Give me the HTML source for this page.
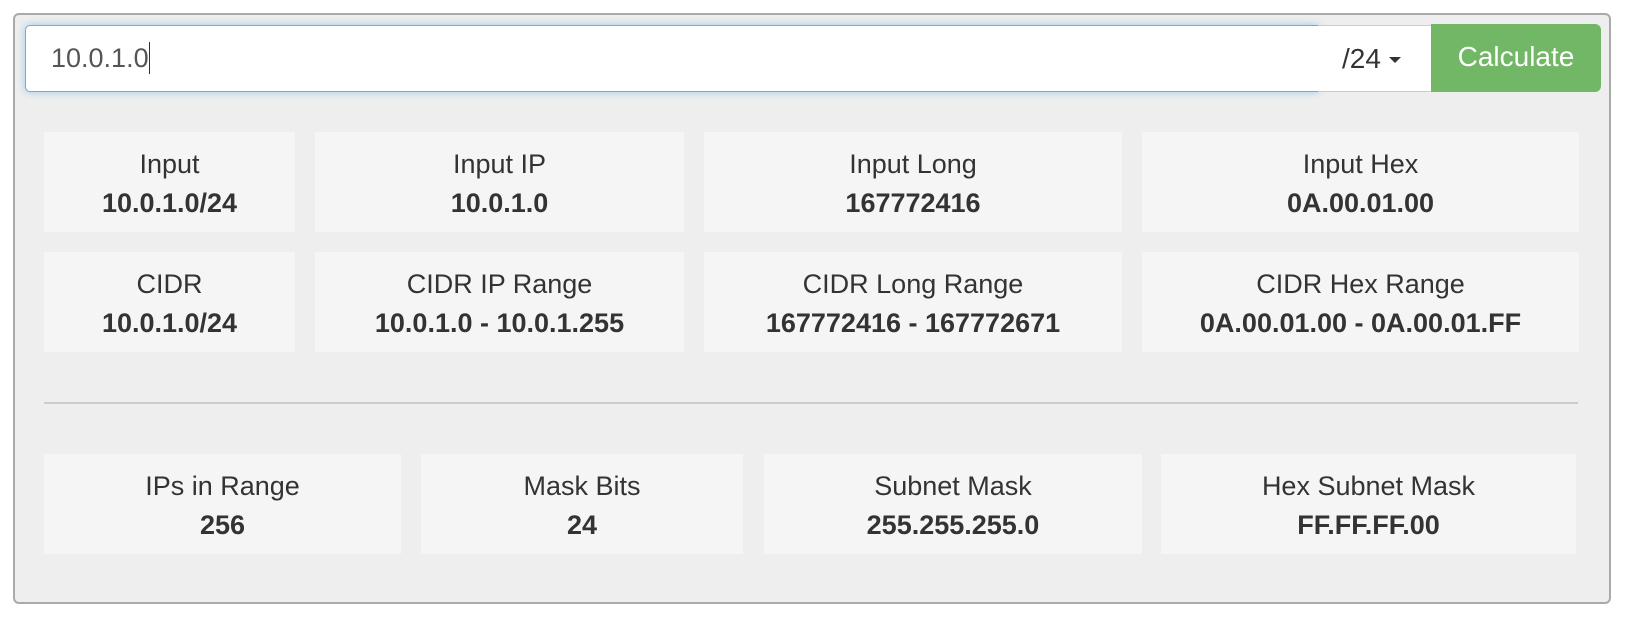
<!DOCTYPE html>
<html><head><meta charset="utf-8"><style>
*{box-sizing:border-box;margin:0;padding:0}
body{width:1628px;height:620px;background:#fff;font-family:"Liberation Sans",Arial,sans-serif;color:#333;position:relative;overflow:hidden}
.panel{position:absolute;left:13px;top:13px;width:1598px;height:591px;background:#eee;border:2px solid #aaa;border-radius:6px}
.abs{position:absolute}
.inp{left:25px;top:25px;width:1294px;height:67px;background:#fff;border:1.5px solid #66afe9;border-radius:5px 0 0 5px;box-shadow:0 0 8px rgba(102,175,233,.6);font-size:27px;line-height:64px;padding-left:25px;color:#555}
.caret{display:inline-block;width:1.5px;height:32px;background:#333;vertical-align:-7px}
.sel{left:1318px;top:25px;width:114px;height:67px;background:#fff;border:1px solid #ccc;border-left:none;font-size:28px;line-height:65px;padding-left:24px;color:#333}
.sel i{display:inline-block;width:0;height:0;border-left:6px solid transparent;border-right:6px solid transparent;border-top:6px solid #333;vertical-align:5px;margin-left:8px}
.btn{left:1431px;top:24px;width:170px;height:68px;background:#72b766;border-radius:0 6px 6px 0;color:#fff;font-size:28px;line-height:66px;text-align:center}
.c{position:absolute;background:#f5f5f5;text-align:center}
.c .l{position:absolute;left:0;right:0;top:18px;font-size:27px;line-height:28px}
.c .v{position:absolute;left:0;right:0;top:57px;font-size:27px;line-height:28px;font-weight:bold}
.hr{left:44px;top:402px;width:1534px;height:2px;background:#ccc}
</style></head><body>
<div class="panel"></div>
<div class="abs inp">10.0.1.0<span class="caret"></span></div>
<div class="abs sel">/24<i></i></div>
<div class="abs btn">Calculate</div>

<div class="c" style="left:44px;top:132px;width:251px;height:100px"><div class="l">Input</div><div class="v">10.0.1.0/24</div></div>
<div class="c" style="left:315px;top:132px;width:369px;height:100px"><div class="l">Input IP</div><div class="v">10.0.1.0</div></div>
<div class="c" style="left:704px;top:132px;width:418px;height:100px"><div class="l">Input Long</div><div class="v">167772416</div></div>
<div class="c" style="left:1142px;top:132px;width:437px;height:100px"><div class="l">Input Hex</div><div class="v">0A.00.01.00</div></div>

<div class="c" style="left:44px;top:252px;width:251px;height:100px"><div class="l">CIDR</div><div class="v">10.0.1.0/24</div></div>
<div class="c" style="left:315px;top:252px;width:369px;height:100px"><div class="l">CIDR IP Range</div><div class="v">10.0.1.0 - 10.0.1.255</div></div>
<div class="c" style="left:704px;top:252px;width:418px;height:100px"><div class="l">CIDR Long Range</div><div class="v">167772416 - 167772671</div></div>
<div class="c" style="left:1142px;top:252px;width:437px;height:100px"><div class="l">CIDR Hex Range</div><div class="v">0A.00.01.00 - 0A.00.01.FF</div></div>

<div class="abs hr"></div>

<div class="c" style="left:44px;top:454px;width:357px;height:100px"><div class="l">IPs in Range</div><div class="v">256</div></div>
<div class="c" style="left:421px;top:454px;width:322px;height:100px"><div class="l">Mask Bits</div><div class="v">24</div></div>
<div class="c" style="left:764px;top:454px;width:378px;height:100px"><div class="l">Subnet Mask</div><div class="v">255.255.255.0</div></div>
<div class="c" style="left:1161px;top:454px;width:415px;height:100px"><div class="l">Hex Subnet Mask</div><div class="v">FF.FF.FF.00</div></div>
</body></html>
